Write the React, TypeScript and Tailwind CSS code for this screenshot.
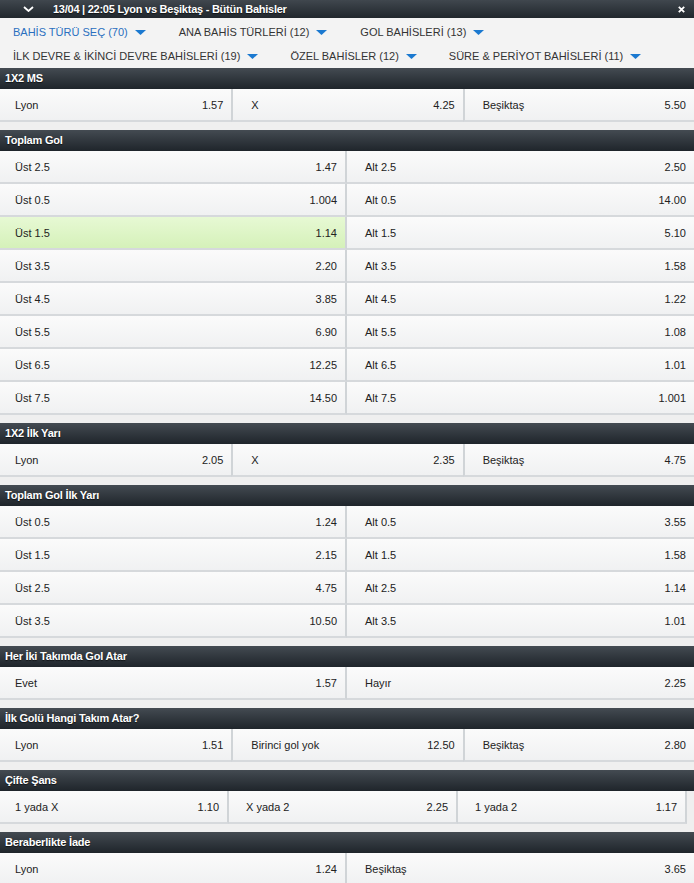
import React from "react";

type Cell = { label: string; value: string; hl?: boolean };

const FONT = { fontFamily: '"Liberation Sans", Arial, sans-serif' };

function Caret() {
  return (
    <svg width="11" height="5" viewBox="0 0 11 5" className="shrink-0">
      <polygon points="0,0 11,0 5.5,5" fill="#1b79d0" />
    </svg>
  );
}

function SectionHeader({ title }: { title: string }) {
  return (
    <div className="h-[21px] flex items-center pl-[5px] bg-gradient-to-b from-[#444b52] to-[#1f252b] text-white font-bold text-[11px] tracking-[-0.2px] [text-shadow:0_1px_1px_rgba(0,0,0,0.6)]">
      {title}
    </div>
  );
}

function CellView({ c, cls }: { c: Cell; cls: string }) {
  return (
    <div
      className={`${cls} h-[33px] pt-[2px] flex items-center justify-between pr-[8px] border-b-2 border-b-[#d6d9dc] ${
        c.hl
          ? "bg-gradient-to-b from-[#e7f9d4] to-[#d5f1b9]"
          : "bg-gradient-to-b from-[#fbfbfb] to-[#f0f1f2]"
      }`}
    >
      <span>{c.label}</span>
      <span>{c.value}</span>
    </div>
  );
}

function cellClass(n: number, j: number, narrow?: boolean) {
  if (narrow) {
    return j === 0
      ? "w-[33%] pl-[15px] border-r-2 border-r-[#d0d4d7]"
      : "w-[33%] pl-[17px] border-r-2 border-r-[#d0d4d7]";
  }
  if (n === 3) {
    return j === 0
      ? "w-1/3 pl-[15px]"
      : "w-1/3 pl-[18px] border-l-2 border-l-[#d0d4d7]";
  }
  return j === 0
    ? "w-1/2 pl-[15px] border-r-2 border-r-[#d0d4d7]"
    : "w-1/2 pl-[18px]";
}

function Section({
  title,
  rows,
  narrow,
}: {
  title: string;
  rows: Cell[][];
  narrow?: boolean;
}) {
  return (
    <div className="mb-[8px]">
      <SectionHeader title={title} />
      {rows.map((r, i) => (
        <div key={i} className="flex text-[11px] text-[#222]">
          {r.map((c, j) => (
            <CellView key={j} c={c} cls={cellClass(r.length, j, narrow)} />
          ))}
        </div>
      ))}
    </div>
  );
}

const totalGoals: Cell[][] = [
  [{ label: "Üst 2.5", value: "1.47" }, { label: "Alt 2.5", value: "2.50" }],
  [{ label: "Üst 0.5", value: "1.004" }, { label: "Alt 0.5", value: "14.00" }],
  [{ label: "Üst 1.5", value: "1.14", hl: true }, { label: "Alt 1.5", value: "5.10" }],
  [{ label: "Üst 3.5", value: "2.20" }, { label: "Alt 3.5", value: "1.58" }],
  [{ label: "Üst 4.5", value: "3.85" }, { label: "Alt 4.5", value: "1.22" }],
  [{ label: "Üst 5.5", value: "6.90" }, { label: "Alt 5.5", value: "1.08" }],
  [{ label: "Üst 6.5", value: "12.25" }, { label: "Alt 6.5", value: "1.01" }],
  [{ label: "Üst 7.5", value: "14.50" }, { label: "Alt 7.5", value: "1.001" }],
];

const firstHalfGoals: Cell[][] = [
  [{ label: "Üst 0.5", value: "1.24" }, { label: "Alt 0.5", value: "3.55" }],
  [{ label: "Üst 1.5", value: "2.15" }, { label: "Alt 1.5", value: "1.58" }],
  [{ label: "Üst 2.5", value: "4.75" }, { label: "Alt 2.5", value: "1.14" }],
  [{ label: "Üst 3.5", value: "10.50" }, { label: "Alt 3.5", value: "1.01" }],
];

function FilterItem({ text, active }: { text: string; active?: boolean }) {
  return (
    <div className="flex items-center gap-[7px]">
      <span className={active ? "text-[#2a6fbf]" : "text-[#333]"}>{text}</span>
      <Caret />
    </div>
  );
}

export default function App() {
  return (
    <div className="w-[694px] h-[883px] overflow-hidden bg-[#efefef]" style={FONT}>
      {/* Top bar */}
      <div className="h-[18px] flex items-center bg-gradient-to-b from-[#40474e] to-[#21272d] text-white">
        <div className="w-[53px] flex items-center pl-[23px]">
          <svg width="11" height="6" viewBox="0 0 11 6">
            <polyline points="1,1 5.5,5 10,1" fill="none" stroke="#fff" strokeWidth="1.8" />
          </svg>
        </div>
        <div className="flex-1 font-bold text-[11px] tracking-[-0.25px] [text-shadow:0_1px_1px_rgba(0,0,0,0.6)]">
          13/04 | 22:05 Lyon vs Beşiktaş - Bütün Bahisler
        </div>
        <div className="pr-[9px]">
          <svg width="7" height="7" viewBox="0 0 7 7">
            <path d="M0.8 0.8 L6.2 6.2 M6.2 0.8 L0.8 6.2" stroke="#fff" strokeWidth="1.8" />
          </svg>
        </div>
      </div>

      {/* Filters */}
      <div className="h-[50px] pt-[3px] pl-[13px] text-[11px] bg-[#f3f3f3]">
        <div className="h-[23px] flex items-center gap-[33px]">
          <FilterItem text="BAHİS TÜRÜ SEÇ (70)" active />
          <FilterItem text="ANA BAHİS TÜRLERİ (12)" />
          <FilterItem text="GOL BAHİSLERİ (13)" />
        </div>
        <div className="h-[24px] flex items-center gap-[32px]">
          <FilterItem text="İLK DEVRE & İKİNCİ DEVRE BAHİSLERİ (19)" />
          <FilterItem text="ÖZEL BAHİSLER (12)" />
          <FilterItem text="SÜRE & PERİYOT BAHİSLERİ (11)" />
        </div>
      </div>

      <Section
        title="1X2 MS"
        rows={[[
          { label: "Lyon", value: "1.57" },
          { label: "X", value: "4.25" },
          { label: "Beşiktaş", value: "5.50" },
        ]]}
      />
      <Section title="Toplam Gol" rows={totalGoals} />
      <Section
        title="1X2 İlk Yarı"
        rows={[[
          { label: "Lyon", value: "2.05" },
          { label: "X", value: "2.35" },
          { label: "Beşiktaş", value: "4.75" },
        ]]}
      />
      <Section title="Toplam Gol İlk Yarı" rows={firstHalfGoals} />
      <Section
        title="Her İki Takımda Gol Atar"
        rows={[[
          { label: "Evet", value: "1.57" },
          { label: "Hayır", value: "2.25" },
        ]]}
      />
      <Section
        title="İlk Golü Hangi Takım Atar?"
        rows={[[
          { label: "Lyon", value: "1.51" },
          { label: "Birinci gol yok", value: "12.50" },
          { label: "Beşiktaş", value: "2.80" },
        ]]}
      />
      <Section
        title="Çifte Şans"
        narrow
        rows={[[
          { label: "1 yada X", value: "1.10" },
          { label: "X yada 2", value: "2.25" },
          { label: "1 yada 2", value: "1.17" },
        ]]}
      />
      <Section
        title="Beraberlikte İade"
        rows={[[
          { label: "Lyon", value: "1.24" },
          { label: "Beşiktaş", value: "3.65" },
        ]]}
      />
    </div>
  );
}
